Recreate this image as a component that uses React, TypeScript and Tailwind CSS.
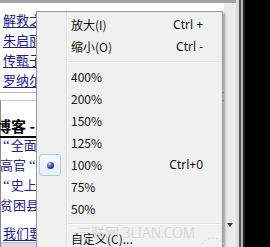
import React from "react";

type Item =
  | { kind: "sep" }
  | { kind: "item"; label: string; sc?: string; checked?: boolean };

const items: Item[] = [
  { kind: "item", label: "放大(I)", sc: "Ctrl +" },
  { kind: "item", label: "缩小(O)", sc: "Ctrl -" },
  { kind: "sep" },
  { kind: "item", label: "400%" },
  { kind: "item", label: "200%" },
  { kind: "item", label: "150%" },
  { kind: "item", label: "125%" },
  { kind: "item", label: "100%", sc: "Ctrl+0", checked: true },
  { kind: "item", label: "75%" },
  { kind: "item", label: "50%" },
  { kind: "sep" },
  { kind: "item", label: "自定义(C)..." },
];

const cjk = { fontFamily: "'Noto Sans CJK SC', 'Noto Sans', sans-serif" };
const ui = { fontFamily: "'Noto Sans', 'Noto Sans CJK SC', sans-serif" };

function Q() {
  return (
    <span className="text-[15px] mr-[1px]" style={{ fontFamily: "'Liberation Serif', serif" }}>
      “
    </span>
  );
}

export default function App() {
  return (
    <div className="relative w-[270px] h-[247px] overflow-hidden flex bg-white">
      {/* page */}
      <div className="w-[224px] shrink-0 flex flex-col" style={cjk}>
        <div className="h-[3px] bg-[#a3a3a3]" />
        <div className="pt-[7px] pl-[3px] flex flex-col text-[13px] leading-[20px] text-[#20208c] whitespace-nowrap">
          <span className="underline underline-offset-2">解救之道</span>
          <span className="underline underline-offset-2">朱启丽</span>
          <span className="underline underline-offset-2">传甄子丹</span>
          <span className="underline underline-offset-2">罗纳尔多</span>
        </div>
        <div className="mt-[2px] border-t border-[#b4b4b4]" />
        <div className="flex-1 flex flex-col border-l border-[#8c8c8c] mt-[7px] border-t border-t-[#c8c8c8]">
          <div className="mt-[12px] h-[22px] whitespace-nowrap">
            <span className="inline-block ml-[-5px] pr-[20px] text-[15px] leading-[20px] font-bold text-black border-b-2 border-black">
              博客 - 新浪
            </span>
          </div>
          <div className="flex flex-col pl-[2px] text-[13px] leading-[19px] text-[#23238e] whitespace-nowrap">
            <span>
              <Q />全面落实
            </span>
            <span className="ml-[-3px]">
              高官 <Q />公开
            </span>
            <span>
              <Q />史上最牛
            </span>
            <span className="ml-[-3px]">贫困县豪华</span>
            <span className="mt-[9px] underline underline-offset-2">我们要</span>
          </div>
          <div className="flex-1 bg-[#dcdcdc] border-t border-[#b8b8b8]" />
        </div>
      </div>

      {/* scrollbar column */}
      <div className="w-[12px] shrink-0 flex flex-col bg-[#ebebeb]">
        <div className="h-[3px] bg-[#a3a3a3]" />
        <div className="pt-[220px] pl-[3px]">
          <div className="w-0 h-0 border-l-[3px] border-r-[3px] border-t-[4px] border-l-transparent border-r-transparent border-t-[#3a3a3a]" />
        </div>
      </div>
      <div className="w-[3px] shrink-0 bg-[#dadada]" />
      <div className="w-[2px] shrink-0 bg-[#555555]" />
      <div className="w-[2px] shrink-0 bg-[#b8b8b8]" />
      <div className="w-[2px] shrink-0 bg-[#222222]" />
      <div className="flex-1 bg-black" />

      {/* context menu */}
      <div
        className="absolute left-[36px] top-[11px] w-[187px] h-[250px] bg-[#f0f0f0] border border-[#979797] shadow-[2px_2px_2px_rgba(0,0,0,0.35)] p-[2px] text-[12px] text-[#111]"
        style={ui}
      >
        <div className="absolute left-[29px] top-0 bottom-0 w-[2px] border-l border-l-[#e0e0e0] border-r border-r-white" />
        {items.map((it, i) =>
          it.kind === "sep" ? (
            <div key={i} className="h-[8px] flex items-center ml-[28px]">
              <div className="w-full border-t border-t-[#e0e0e0] border-b border-b-white" />
            </div>
          ) : (
            <div key={i} className="relative flex items-center h-[22px] whitespace-nowrap">
              <div className="w-[22px] h-[22px] shrink-0 flex items-center justify-center">
                {it.checked && (
                  <div className="w-[22px] h-[22px] rounded-[3px] border border-[#b2cbe8] bg-linear-to-b from-[#f6f9fd] to-[#e6eef8] flex items-center justify-center">
                    <div className="w-[7px] h-[7px] rounded-full bg-[radial-gradient(circle_at_35%_30%,#c4c8f0,#3a3a8e_55%,#1c1c5c)]" />
                  </div>
                )}
              </div>
              <span className="ml-[10px]" style={cjk}>
                {it.label}
              </span>
              {it.sc && <span className="ml-auto mr-[17px]">{it.sc}</span>}
            </div>
          )
        )}
      </div>

      {/* watermark */}
      <div
        className="absolute left-[77px] top-[225px] text-[14px] leading-[16px] font-light text-[#c4c4c4] opacity-70 whitespace-nowrap pointer-events-none"
        style={ui}
      >
        三联网 3LIAN.COM
      </div>
      <svg className="absolute left-[196px] top-[233px] pointer-events-none" width="34" height="20" viewBox="0 0 34 20">
        <circle cx="17" cy="18" r="13" fill="none" stroke="#dadada" strokeWidth="1.2" strokeDasharray="2 2" />
      </svg>
    </div>
  );
}
